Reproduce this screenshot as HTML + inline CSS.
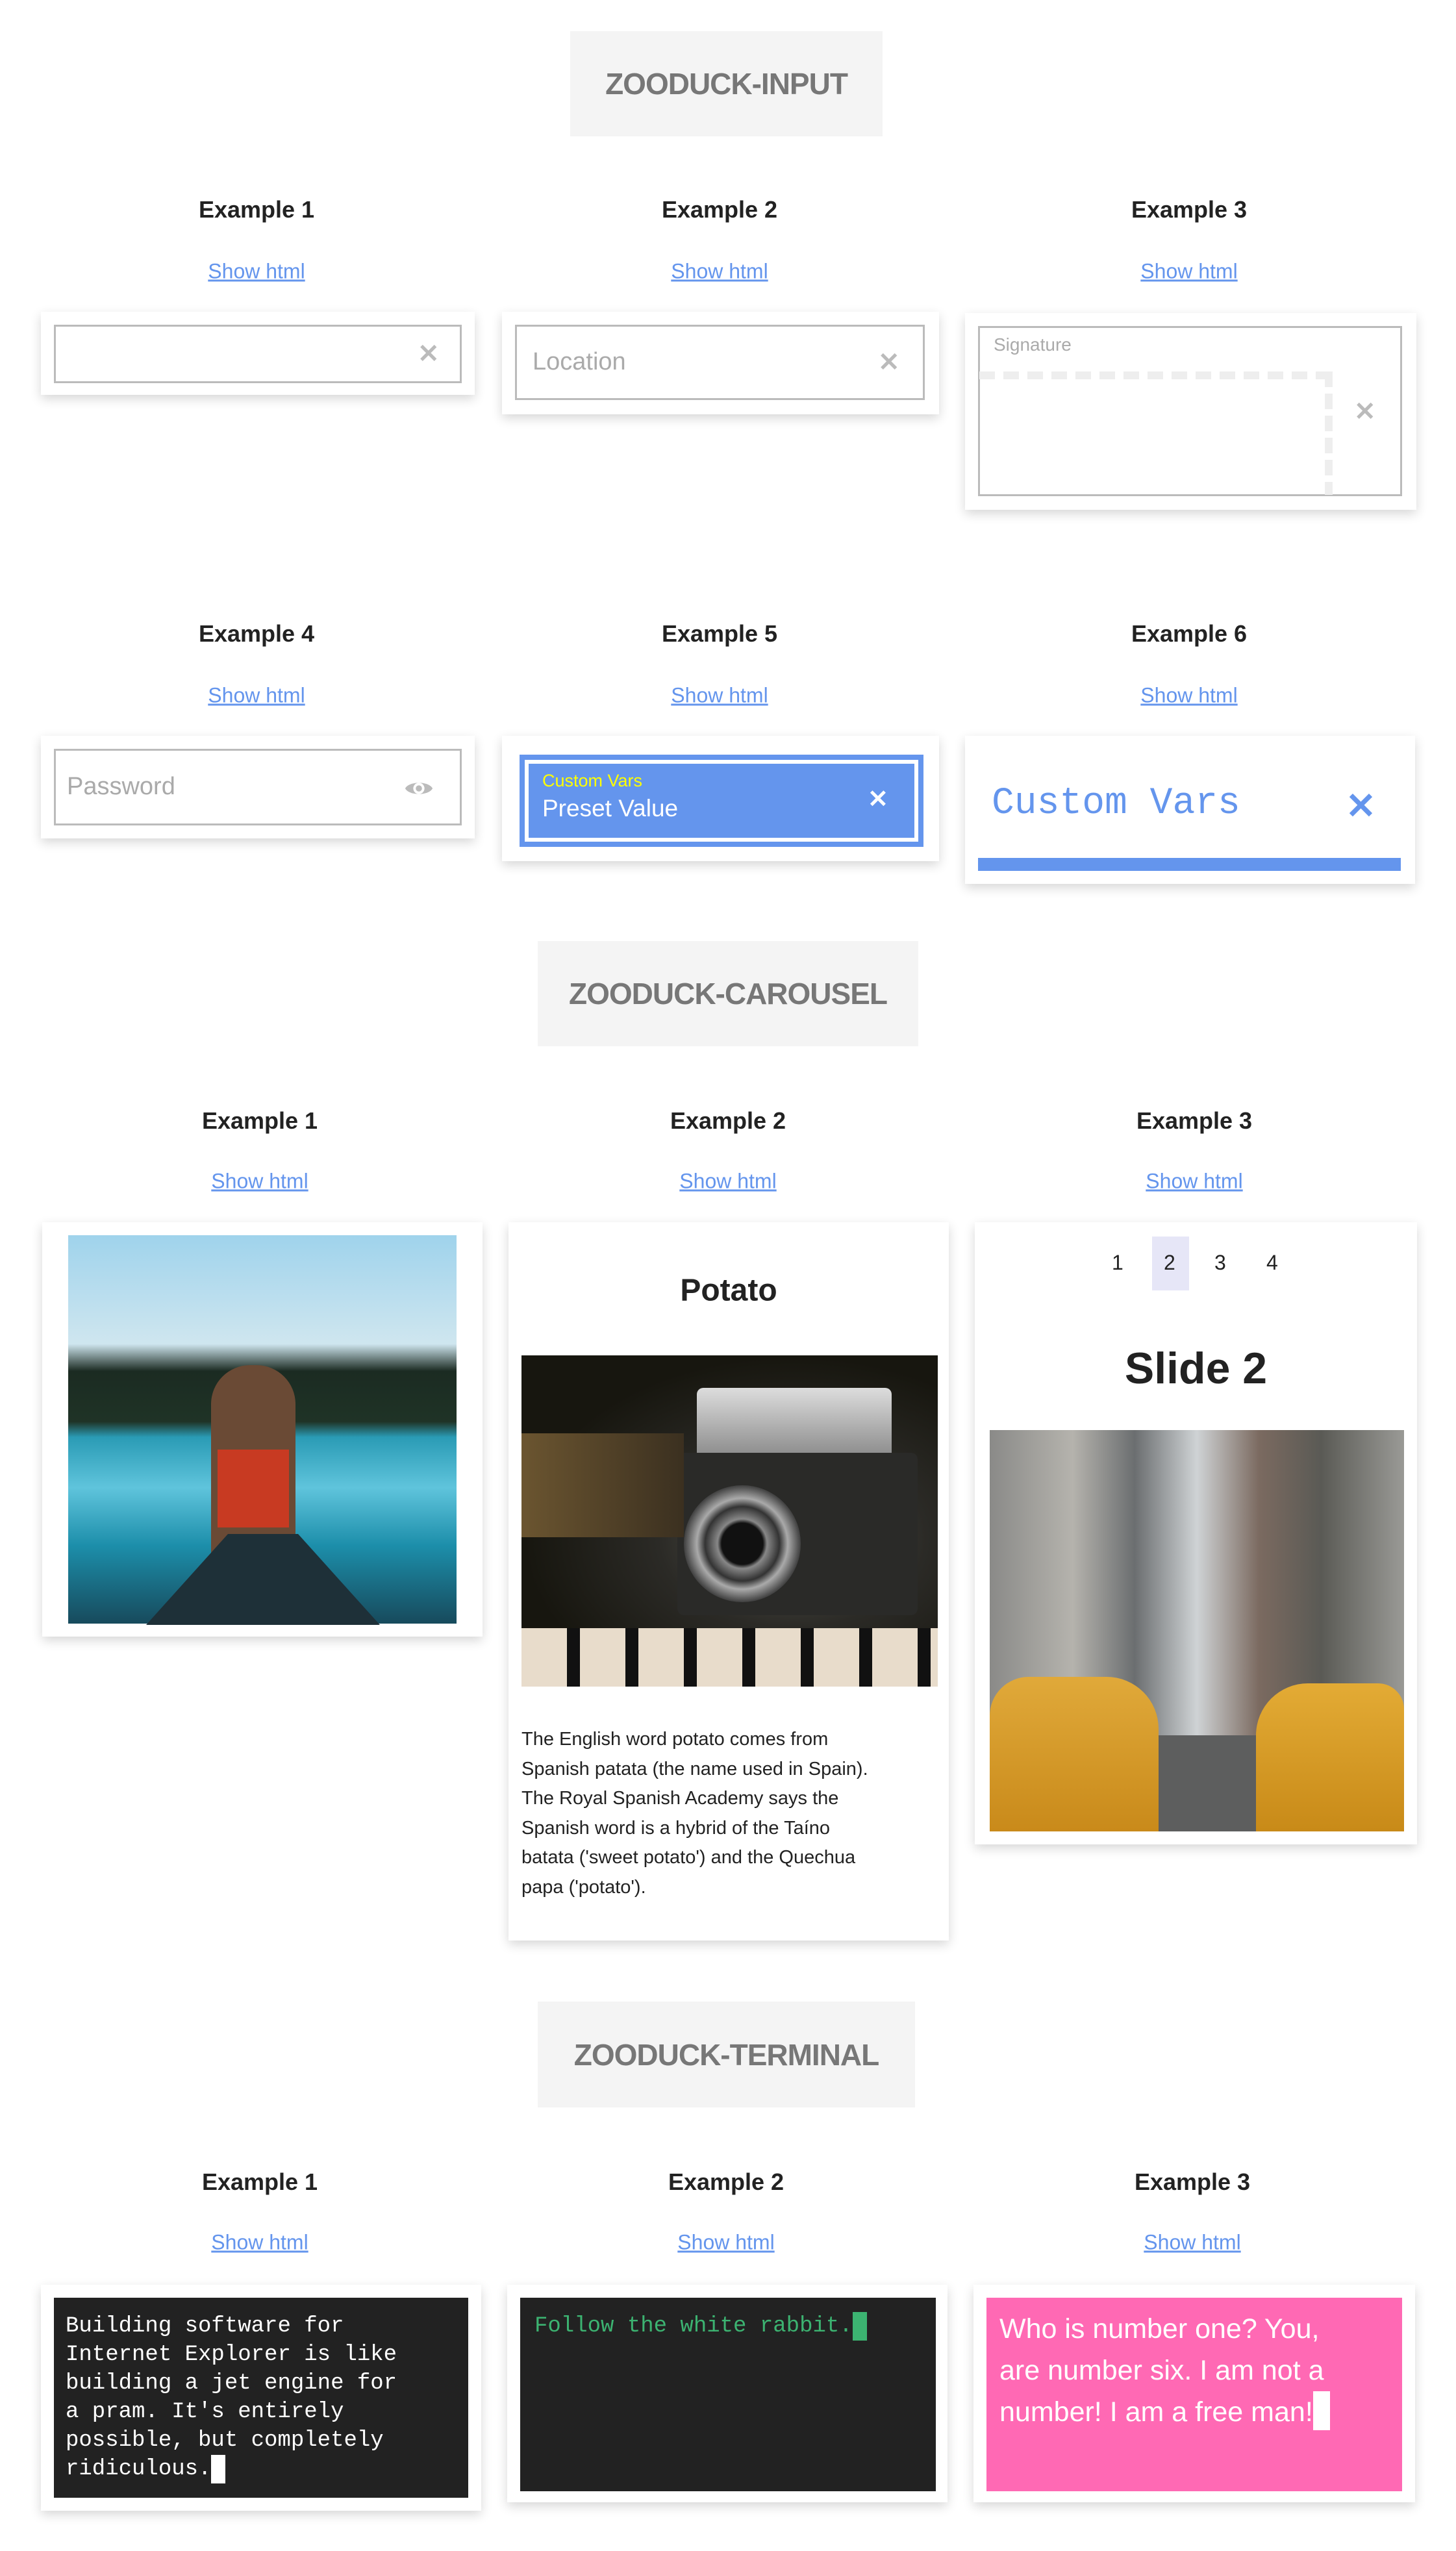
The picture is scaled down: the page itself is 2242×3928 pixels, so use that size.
<!DOCTYPE html>
<html><head><meta charset="utf-8"><style>
*{margin:0;padding:0;box-sizing:border-box}
body{width:2242px;height:3928px;background:#fff;position:relative;font-family:"Liberation Sans",sans-serif;overflow:hidden}
.a{position:absolute}
.title{position:absolute;background:#f4f4f4;color:#777;font-weight:bold;font-size:46px;display:flex;align-items:center;justify-content:center;letter-spacing:-1px}
.h{position:absolute;width:600px;text-align:center;font-weight:bold;font-size:36px;color:#222;transform:translate(-50%,-50%)}
.l{position:absolute;width:600px;text-align:center;font-size:32px;color:#6495ed;text-decoration:underline;transform:translate(-50%,-50%)}
.card{position:absolute;background:#fff;box-shadow:0 6px 16px rgba(0,0,0,.16)}
.inp{position:absolute;border:3px solid #bbb;background:#fff}
.x{position:absolute;color:#bbb;font-weight:bold;font-size:40px;line-height:1}
</style></head><body>

<div class="title" style="left:878px;top:48px;width:481px;height:162px">ZOODUCK-INPUT</div>

<div class="h" style="left:395px;top:323px">Example 1</div>
<div class="h" style="left:1108px;top:323px">Example 2</div>
<div class="h" style="left:1831px;top:323px">Example 3</div>
<div class="l" style="left:395px;top:418px">Show html</div>
<div class="l" style="left:1108px;top:418px">Show html</div>
<div class="l" style="left:1831px;top:418px">Show html</div>

<div class="card" style="left:63px;top:480px;width:668px;height:128px"></div>
<div class="inp" style="left:83px;top:500px;width:628px;height:90px"></div>
<div class="x" style="left:643px;top:525px">✕</div>

<div class="card" style="left:773px;top:480px;width:673px;height:158px"></div>
<div class="inp" style="left:793px;top:500px;width:631px;height:116px"></div>
<div class="a" style="left:820px;top:536px;font-size:38px;color:#aaa">Location</div>
<div class="x" style="left:1352px;top:538px">✕</div>

<div class="card" style="left:1486px;top:482px;width:695px;height:303px"></div>
<div class="inp" style="left:1506px;top:502px;width:653px;height:262px"></div>
<div class="a" style="left:1530px;top:515px;font-size:28px;color:#aaa">Signature</div>
<div class="a" style="left:1508px;top:572px;width:544px;height:12px;background:repeating-linear-gradient(90deg,#eee 0 24px,transparent 24px 37px)"></div>
<div class="a" style="left:2040px;top:572px;width:12px;height:190px;background:repeating-linear-gradient(180deg,#eee 0 24px,transparent 24px 34px)"></div>
<div class="x" style="left:2085px;top:614px">✕</div>

<div class="h" style="left:395px;top:976px">Example 4</div>
<div class="h" style="left:1108px;top:976px">Example 5</div>
<div class="h" style="left:1831px;top:976px">Example 6</div>
<div class="l" style="left:395px;top:1071px">Show html</div>
<div class="l" style="left:1108px;top:1071px">Show html</div>
<div class="l" style="left:1831px;top:1071px">Show html</div>

<div class="card" style="left:63px;top:1133px;width:668px;height:158px"></div>
<div class="inp" style="left:83px;top:1153px;width:628px;height:118px"></div>
<div class="a" style="left:103px;top:1190px;font-size:38px;color:#aaa">Password</div>
<svg class="a" style="left:622px;top:1198px" width="46" height="32" viewBox="0 0 24 16"><path d="M1 8C4 2 20 2 23 8C20 14 4 14 1 8Z" fill="#bbb"/><circle cx="12" cy="8" r="4.5" fill="#fff"/><circle cx="12" cy="8" r="2.5" fill="#bbb"/></svg>

<div class="card" style="left:773px;top:1133px;width:673px;height:193px"></div>
<div class="a" style="left:800px;top:1162px;width:622px;height:142px;background:#6495ed;padding:8px"><div style="width:100%;height:100%;border:6px solid #fff"></div></div>
<div class="a" style="left:835px;top:1187px;font-size:27px;color:#ffff00">Custom Vars</div>
<div class="a" style="left:835px;top:1224px;font-size:37px;color:#fff">Preset Value</div>
<div class="x" style="left:1336px;top:1212px;color:#fff;font-size:38px">✕</div>

<div class="card" style="left:1486px;top:1133px;width:693px;height:228px"></div>
<div class="a" style="left:1527px;top:1205px;font-family:'Liberation Mono',monospace;font-size:58px;color:#6495ed">Custom Vars</div>
<div class="x" style="left:2072px;top:1213px;color:#6495ed;font-size:56px">✕</div>
<div class="a" style="left:1506px;top:1321px;width:651px;height:20px;background:#6495ed"></div>

<div class="title" style="left:828px;top:1449px;width:586px;height:162px">ZOODUCK-CAROUSEL</div>

<div class="h" style="left:400px;top:1726px">Example 1</div>
<div class="h" style="left:1121px;top:1726px">Example 2</div>
<div class="h" style="left:1839px;top:1726px">Example 3</div>
<div class="l" style="left:400px;top:1819px">Show html</div>
<div class="l" style="left:1121px;top:1819px">Show html</div>
<div class="l" style="left:1839px;top:1819px">Show html</div>

<div class="card" style="left:65px;top:1882px;width:678px;height:638px"></div>
<div class="a" style="left:105px;top:1902px;width:598px;height:598px;background:linear-gradient(180deg,#9fd3ec 0%,#cfe6ef 28%,#1b2b22 35%,#1f3326 48%,#2a9bb5 52%,#5fc4dc 65%,#1c8eaa 80%,#174a5c 100%)">
<div class="a" style="left:220px;top:200px;width:130px;height:320px;background:#6a4a35;border-radius:60px 60px 10px 10px"></div>
<div class="a" style="left:230px;top:330px;width:110px;height:120px;background:#c83a22"></div>
<div class="a" style="left:120px;top:460px;width:360px;height:140px;background:#1e3038;clip-path:polygon(35% 0,65% 0,100% 100%,0 100%)"></div>
</div>

<div class="card" style="left:783px;top:1882px;width:678px;height:1106px"></div>
<div class="a" style="left:783px;top:1987px;width:678px;text-align:center;font-size:48px;font-weight:bold;color:#222;transform:translateY(-50%)">Potato</div>
<div class="a" style="left:803px;top:2087px;width:641px;height:510px;background:radial-gradient(ellipse at 65% 55%,#5a5a52 0%,#2b2a26 35%,#17160f 70%),#111;overflow:hidden">
<div class="a" style="left:270px;top:50px;width:300px;height:110px;background:linear-gradient(#ddd,#888);border-radius:10px"></div>
<div class="a" style="left:240px;top:150px;width:370px;height:250px;background:#2a2a28;border-radius:10px"></div>
<div class="a" style="left:250px;top:200px;width:180px;height:180px;border-radius:50%;background:radial-gradient(circle,#111 25%,#888 30%,#333 45%,#aaa 55%,#444 70%)"></div>
<div class="a" style="left:0;top:420px;width:641px;height:90px;background:repeating-linear-gradient(90deg,#e8dccb 0 70px,#111 70px 90px)"></div>
<div class="a" style="left:0;top:120px;width:250px;height:160px;background:linear-gradient(90deg,#6b5530,#3b3020)"></div>
</div>
<div class="a" style="left:803px;top:2656px;width:660px;font-size:29px;line-height:45.5px;color:#222;white-space:nowrap">The English word potato comes from<br>Spanish patata (the name used in Spain).<br>The Royal Spanish Academy says the<br>Spanish word is a hybrid of the Taíno<br>batata ('sweet potato') and the Quechua<br>papa ('potato').</div>

<div class="card" style="left:1501px;top:1882px;width:681px;height:958px"></div>
<div class="a" style="left:1774px;top:1904px;width:57px;height:83px;background:#e6e6f7"></div>
<div class="a" style="left:1712px;top:1926px;font-size:32px;color:#222">1</div>
<div class="a" style="left:1792px;top:1926px;font-size:32px;color:#222">2</div>
<div class="a" style="left:1870px;top:1926px;font-size:32px;color:#222">3</div>
<div class="a" style="left:1950px;top:1926px;font-size:32px;color:#222">4</div>
<div class="a" style="left:1501px;top:2107px;width:681px;text-align:center;font-size:68px;font-weight:bold;color:#222;transform:translateY(-50%)">Slide 2</div>
<div class="a" style="left:1524px;top:2202px;width:638px;height:618px;background:linear-gradient(90deg,#8a8a88 0%,#b5b3ad 20%,#6b6e70 35%,#cfd3d5 50%,#7b6a60 65%,#5a5a55 80%,#9a9a96 100%);overflow:hidden">
<div class="a" style="left:0;top:380px;width:260px;height:238px;background:linear-gradient(#e0a93a,#c98a1a);border-radius:60px 80px 0 0"></div>
<div class="a" style="left:410px;top:390px;width:228px;height:228px;background:linear-gradient(#e3ab35,#c88a18);border-radius:80px 40px 0 0"></div>
<div class="a" style="left:260px;top:470px;width:150px;height:148px;background:#5d5e5e"></div>
</div>

<div class="title" style="left:828px;top:3082px;width:581px;height:163px">ZOODUCK-TERMINAL</div>

<div class="h" style="left:400px;top:3360px">Example 1</div>
<div class="h" style="left:1118px;top:3360px">Example 2</div>
<div class="h" style="left:1836px;top:3360px">Example 3</div>
<div class="l" style="left:400px;top:3453px">Show html</div>
<div class="l" style="left:1118px;top:3453px">Show html</div>
<div class="l" style="left:1836px;top:3453px">Show html</div>

<div class="card" style="left:63px;top:3518px;width:678px;height:348px"></div>
<div class="a" style="left:83px;top:3538px;width:638px;height:308px;background:#222;padding:22px 18px;font-family:'Liberation Mono',monospace;font-size:34px;line-height:44px;color:#fff;white-space:nowrap">Building software for<br>Internet Explorer is like<br>building a jet engine for<br>a pram. It's entirely<br>possible, but completely<br>ridiculous.<span style="display:inline-block;width:22px;height:44px;background:#fff;vertical-align:top"></span></div>

<div class="card" style="left:781px;top:3518px;width:678px;height:335px"></div>
<div class="a" style="left:801px;top:3538px;width:640px;height:298px;background:#222;padding:22px 22px;font-family:'Liberation Mono',monospace;font-size:34px;line-height:44px;color:#3cb371">Follow the white rabbit.<span style="display:inline-block;width:22px;height:44px;background:#3cb371;vertical-align:top"></span></div>

<div class="card" style="left:1499px;top:3518px;width:680px;height:335px"></div>
<div class="a" style="left:1519px;top:3538px;width:640px;height:298px;background:#ff69b4;padding:16px 20px;font-size:43px;line-height:64px;color:#fff;white-space:nowrap">Who is number one? You,<br>are number six. I am not a<br>number! I am a free man!<span style="display:inline-block;width:26px;height:60px;background:#fff;vertical-align:top"></span></div>

</body></html>
